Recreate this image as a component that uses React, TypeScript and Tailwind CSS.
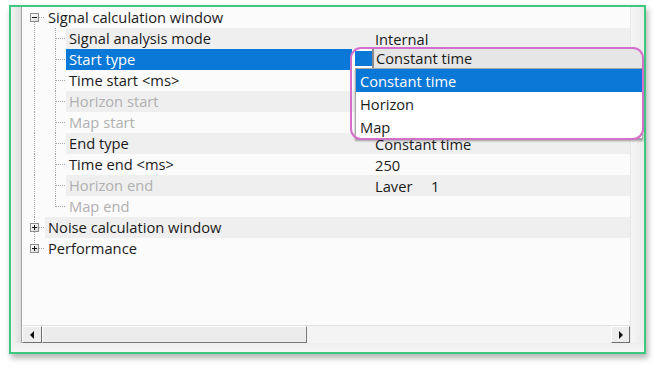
import React from "react";

type Row = {
  kind: "root" | "child";
  label: string;
  value?: string;
  stripe?: boolean;
  selected?: boolean;
  disabled?: boolean;
  expander?: "minus" | "plus";
  first?: boolean;
  last?: boolean;
};

const rows: Row[] = [
  { kind: "root", label: "Signal calculation window", expander: "minus", first: true },
  { kind: "child", label: "Signal analysis mode", value: "Internal", stripe: true },
  { kind: "child", label: "Start type", selected: true },
  { kind: "child", label: "Time start <ms>" },
  { kind: "child", label: "Horizon start", disabled: true, stripe: true },
  { kind: "child", label: "Map start", disabled: true },
  { kind: "child", label: "End type", value: "Constant time", stripe: true },
  { kind: "child", label: "Time end <ms>", value: "250" },
  { kind: "child", label: "Horizon end", disabled: true, value: "Laver", stripe: true },
  { kind: "child", label: "Map end", disabled: true, last: true },
  { kind: "root", label: "Noise calculation window", expander: "plus", stripe: true },
  { kind: "root", label: "Performance", expander: "plus", last: true },
];

const dot = { stroke: "#a4a4a4", strokeWidth: 1, strokeDasharray: "1 1", shapeRendering: "crispEdges" as const };

function RootGlyph({ row }: { row: Row }) {
  return (
    <svg width={23} height={21} className="shrink-0">
      <defs>
        <linearGradient id="exg" x1="0" y1="0" x2="1" y2="1">
          <stop offset="0" stopColor="#ffffff" />
          <stop offset="1" stopColor="#d8d8d8" />
        </linearGradient>
      </defs>
      {!row.first && <line x1={12.5} y1={0} x2={12.5} y2={6} {...dot} />}
      {!row.last && <line x1={12.5} y1={15} x2={12.5} y2={21} {...dot} />}
      <line x1={17} y1={10.5} x2={23} y2={10.5} {...dot} />
      <rect x={8.5} y={6.5} width={8} height={8} fill="url(#exg)" stroke="#8e8e8e" strokeWidth={1} shapeRendering="crispEdges" />
      <rect x={10} y={10} width={5} height={1} fill="#111" />
      {row.expander === "plus" && <rect x={12} y={8} width={1} height={5} fill="#111" />}
    </svg>
  );
}

function ChildGlyph({ row }: { row: Row }) {
  return (
    <svg width={44} height={21} className="shrink-0">
      <line x1={12.5} y1={0} x2={12.5} y2={21} {...dot} />
      <line x1={33.5} y1={0} x2={33.5} y2={row.last ? 11 : 21} {...dot} />
      <line x1={34} y1={10.5} x2={44} y2={10.5} {...dot} />
    </svg>
  );
}

function TreeRow({ row }: { row: Row }) {
  const bg = row.stripe ? "bg-[#efefef]" : "bg-[#fbfbfb]";
  const txt = row.disabled ? "text-[#b0b0b0]" : "text-[#1b1b1b]";
  return (
    <div className="flex h-[21px] leading-[21px]">
      {row.kind === "root" ? <RootGlyph row={row} /> : <ChildGlyph row={row} />}
      <div
        className={`${row.kind === "root" ? "w-[307px]" : "w-[286px]"} shrink-0 pl-[3px] whitespace-pre ${
          row.selected ? "bg-[#0a78d7] text-white" : `${bg} ${txt}`
        }`}
      >
        {row.label}
      </div>
      <div className={`flex-1 pl-[23px] pt-[1px] whitespace-pre text-[#1b1b1b] ${row.selected ? "bg-[#fbfbfb]" : bg}`}>
        {row.value === "Laver" ? (
          <span className="flex">
            <span className="w-[56px]">Laver</span>
            <span>1</span>
          </span>
        ) : (
          row.value
        )}
      </div>
    </div>
  );
}

function Arrow({ dir }: { dir: "left" | "right" }) {
  return (
    <svg width={5} height={8}>
      {dir === "left" ? <polygon points="4,0 4,8 0,4" fill="#111" /> : <polygon points="1,0 1,8 5,4" fill="#111" />}
    </svg>
  );
}

export default function App() {
  return (
    <div className="relative w-[656px] h-[368px] bg-white overflow-hidden pt-[5px] pl-[9px] font-['Open_Sans',sans-serif] text-[14.7px]">
      <div className="w-[637px] h-[349px] border-2 border-[#3ec77f] flex flex-col bg-[#fbfbfb] shadow-[2px_4px_6px_rgba(0,0,0,0.3)]">
        <div className="flex flex-1">
          <div className="w-[11px] shrink-0 bg-gradient-to-r from-[#f3f3f3] to-[#dedede] border-r border-[#a3a3a3]" />
          <div className="flex-1 flex flex-col">
            <div className="h-[318px] flex flex-col">
              {rows.map((r, i) => (
                <TreeRow key={i} row={r} />
              ))}
            </div>
            <div className="h-[18px] flex bg-[#f4f4f4] border-t border-[#e2e2e2]">
              <div className="w-[20px] flex items-center justify-center bg-[#ededed] border border-t-white border-l-white border-r-[#6f6f6f] border-b-[#6f6f6f]">
                <Arrow dir="left" />
              </div>
              <div className="w-[265px] bg-[#ececec] border border-t-white border-l-white border-r-[#7a7a7a] border-b-[#7a7a7a]" />
              <div className="flex-1" />
              <div className="w-[19px] flex items-center justify-center bg-[#ededed] border border-t-white border-l-white border-r-[#6f6f6f] border-b-[#6f6f6f]">
                <Arrow dir="right" />
              </div>
            </div>
          </div>
          <div className="w-[14px] shrink-0 bg-gradient-to-r from-[#f6f6f6] to-[#ebebeb] border-l border-[#e6e6e6]" />
        </div>
        <div className="h-[9px] bg-gradient-to-b from-[#eeeeee] to-[#f6f6f6]" />
      </div>

      {/* open combobox with dropdown list */}
      <div className="absolute left-[355px] top-[49px] w-[288px] flex flex-col">
        <div className="flex h-[19px] items-center">
          <div className="w-[17px] h-[15px] bg-[#0a78d7]" />
          <div className="flex-1 h-[19px] leading-[19px] bg-[#e6e6e6] border-l-2 border-[#8a8a8a] pl-[2px] text-[#1b1b1b]">
            Constant time
          </div>
        </div>
        <div className="bg-white border border-[#a8a8a8] shadow-[0_2px_2px_rgba(0,0,0,0.35)] flex flex-col">
          <div className="h-[23px] leading-[24px] pl-[4px] bg-[#0a78d7] text-white">Constant time</div>
          <div className="h-[23px] leading-[24px] pl-[4px] text-[#1b1b1b]">Horizon</div>
          <div className="h-[23px] leading-[24px] pl-[4px] text-[#1b1b1b]">Map</div>
        </div>
      </div>

      {/* annotation highlight */}
      <div className="absolute left-[350px] top-[47px] w-[294px] h-[93px] border-2 border-[#d46fcb] rounded-[11px]" />
    </div>
  );
}
